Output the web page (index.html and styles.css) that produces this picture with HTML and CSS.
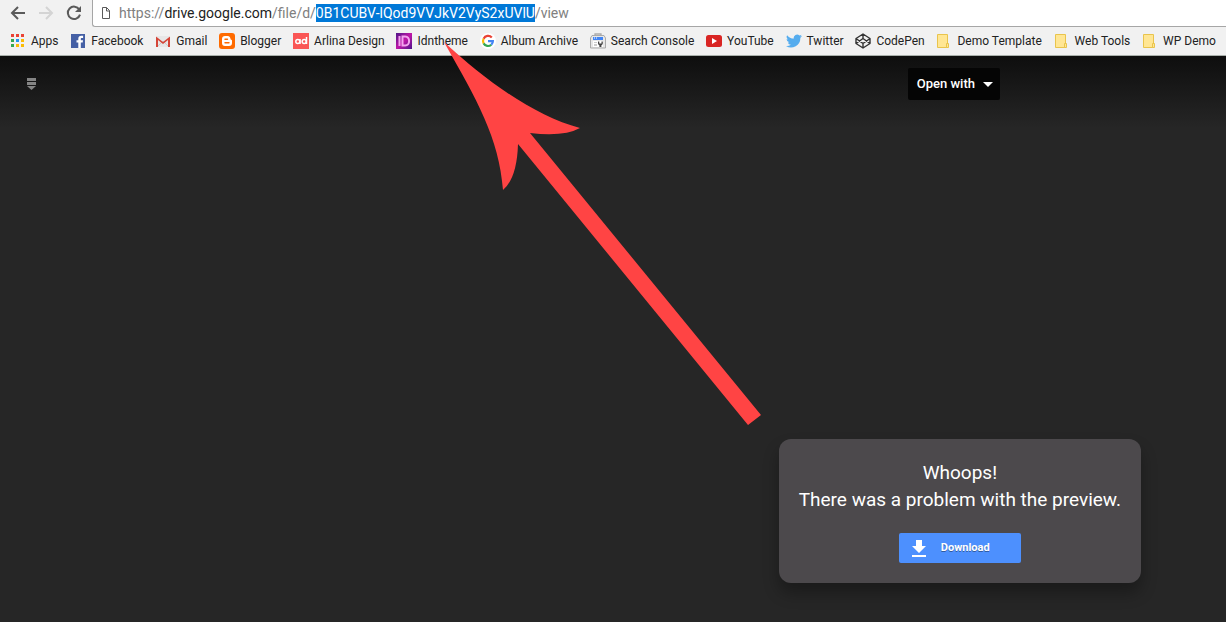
FILE: index.html
```html
<!DOCTYPE html>
<html lang="en">
<head>
<meta charset="utf-8">
<title>Google Drive preview</title>
<link rel="stylesheet" href="styles.css">
</head>
<body>
<header class="browser">
  <div class="toolbar">
    <button class="nav-button" aria-label="Back"><svg width="16" height="16" viewBox="0 0 16 16"><path d="M15 8H2M8 2L2 8l6 6" fill="none" stroke="#5a5a5a" stroke-width="2"/></svg></button>
    <button class="nav-button" aria-label="Forward" disabled><svg width="16" height="16" viewBox="0 0 16 16"><path d="M1 8h13M8 2l6 6-6 6" fill="none" stroke="#d4d4d4" stroke-width="2"/></svg></button>
    <button class="nav-button" aria-label="Reload"><svg width="16" height="16" viewBox="0 0 16 16"><path d="M13.3 4.5A6.2 6.2 0 1 0 14 9.6" fill="none" stroke="#5a5a5a" stroke-width="2"/><path d="M15 1v6H9z" fill="#5a5a5a"/></svg></button>
    <div class="address">
      <svg width="10" height="14" viewBox="0 0 10 14"><path d="M1.500 1.500h4l3 3v8h-7zM5.500 1.500V5h3" fill="#fff" stroke="#5a5a5a"/></svg>
      <div class="url" role="textbox" aria-label="Address" contenteditable="true" spellcheck="false">https://<span class="host">drive.google.com</span>/file/d/<mark class="selected">0B1CUBV-lQod9VVJkV2VyS2xUVlU</mark>/view</div>
    </div>
  </div>
  <nav class="bookmarks" aria-label="Bookmarks">
    <a class="bookmark" href="#"><svg width="16" height="16" viewBox="0 0 16 16"><path d="M1 1h3v3H1zm5 0h3v3H6zm5 0h3v3h-3z" fill="#ea4335"/><path d="M1 6h3v3H1zm0 5h3v3H1z" fill="#34a853"/><path d="M6 6h3v3H6z" fill="#2196f3"/><path d="M11 6h3v3h-3zM6 11h3v3H6zm5 0h3v3h-3z" fill="#fbbc05"/></svg>Apps</a>
    <a class="bookmark" href="#"><svg width="16" height="16" viewBox="0 0 16 16"><path d="M1 1h14v14H1z" fill="#4560a5"/><path d="M8.300 15V9.500H6.500V7.300h1.800V5.800c0-2 1.100-3 3-3h1.800v2.300h-1.300c-.8 0-1 .4-1 1v1.200H13l-.3 2.200h-1.900V15z" fill="#fff"/></svg>Facebook</a>
    <a class="bookmark" href="#"><svg width="16" height="16" viewBox="0 0 16 16"><path d="M2 3h12v11H2z" fill="#e7e7e7"/><path d="M3 13l5-5 5 5" fill="none" stroke="#ccc"/><path d="M1 14V3.500L8 9l7-5.500V14h-2V7l-5 4-5-4v7z" fill="#d54538"/></svg>Gmail</a>
    <a class="bookmark" href="#"><svg width="16" height="16" viewBox="0 0 16 16"><rect width="16" height="16" rx="3" fill="#ff6b00"/><path d="M6 3h2.500C10.500 3 11.500 4.500 11.500 6c0 1 1.500.5 1.500 1.700V10a3 3 0 0 1-3 3H6a3 3 0 0 1-3-3V6a3 3 0 0 1 3-3z" fill="#fff"/><path d="M6 6.200h2.500M6 9.800h4" stroke="#ff6b00" stroke-width="1.400" stroke-linecap="round"/></svg>Blogger</a>
    <a class="bookmark" href="#"><svg width="16" height="16" viewBox="0 0 16 16"><path d="M0 0h16v16H0z" fill="#fa5655"/><g fill="none" stroke="#fff" stroke-width="1.500"><circle cx="4.800" cy="8.500" r="2"/><path d="M7 6v5M13.500 4v7"/><circle cx="11.200" cy="8.500" r="2"/></g></svg>Arlina Design</a>
    <a class="bookmark" href="#"><svg width="16" height="16" viewBox="0 0 16 16"><defs><linearGradient id="idn" x2="1" y2="1"><stop stop-color="#4e1687"/><stop offset=".5" stop-color="#c016a8"/><stop offset="1" stop-color="#4d128a"/></linearGradient></defs><path d="M0 0h16v16H0z" fill="url(#idn)"/><path d="M3.500 3v10M6.500 3.500h2.700c5.200 0 5.200 9 0 9H6.500z" fill="none" stroke="#f3a4ef" stroke-width="2"/></svg>Idntheme</a>
    <a class="bookmark" href="#"><svg width="16" height="16" viewBox="0 0 16 16"><circle cx="8" cy="8" r="8" fill="#fff"/><g fill="none" stroke-width="2.200"><path d="M11.800 4.500A5 5 0 0 0 3.600 5.700" stroke="#ea4335"/><path d="M3.600 5.700a5 5 0 0 0 0 4.700" stroke="#fbbc05"/><path d="M3.600 10.400a5 5 0 0 0 7.700 1.300" stroke="#34a853"/><path d="M11.300 11.700C12.500 10.600 12.900 9.600 12.900 8.100H8" stroke="#4285f4"/></g></svg>Album Archive</a>
    <a class="bookmark" href="#"><svg width="16" height="16" viewBox="0 0 16 16"><path d="M5 3V1h6v2" fill="none" stroke="#aaa" stroke-width="1.300"/><path d="M2 2.500h12L15.500 5v10H.5V5z" fill="#e7e7e7" stroke="#aaa"/><path d="M3 4h10v3H3z" fill="#4285f4"/><path d="M4 5h1m1 0h1" stroke="#fff"/><path d="M3 8h10v6H3z" fill="#fff"/><path d="M4 9h3v1H4zm0 2h3v2H4z" fill="#ccc"/><path d="M8 8.500v1.800c0 1.200.7 1.700 1.400 2V14h2v-1.700c.7-.3 1.400-.8 1.400-2V8.500h-1.300v2H9.300v-2z" fill="#444"/></svg>Search Console</a>
    <a class="bookmark" href="#"><svg width="16" height="16" viewBox="0 0 16 16"><rect y="2" width="16" height="12" rx="2.500" fill="#d92523"/><path d="M6 5l5 3-5 3z" fill="#fff"/></svg>YouTube</a>
    <a class="bookmark" href="#"><svg width="16" height="16" viewBox="0 0 24 24"><path d="M24 4.600a10 10 0 0 1-2.800.8 5 5 0 0 0 2.100-2.700 10 10 0 0 1-3.100 1.200 4.900 4.900 0 0 0-8.400 4.500A14 14 0 0 1 1.700 3.200a4.900 4.900 0 0 0 1.500 6.500 5 5 0 0 1-2.200-.6 4.900 4.900 0 0 0 3.900 4.900 5 5 0 0 1-2.200.1 4.900 4.900 0 0 0 4.600 3.400A10 10 0 0 1 0 19.500a14 14 0 0 0 21.500-12.400A10 10 0 0 0 24 4.600z" fill="#55acee"/></svg>Twitter</a>
    <a class="bookmark" href="#"><svg width="16" height="16" viewBox="0 0 16 16"><path d="M8 1l7 4.500v5L8 15l-7-4.500v-5zM8 1v4.500M8 10.500V15M1 5.500l7 5 7-5M1 10.500l7-5 7 5" fill="none" stroke="#333" stroke-width="1.400" stroke-linejoin="round"/></svg>CodePen</a>
    <a class="bookmark" href="#"><svg width="16" height="16" viewBox="0 0 16 16"><path d="M1.500 1.500h10v13h-10z" fill="#ffe694" stroke="#e9c44c"/><path d="M10.500 10.500h2v4h-2z" fill="#ffe694" stroke="#e9c44c"/></svg>Demo Template</a>
    <a class="bookmark" href="#"><svg width="16" height="16" viewBox="0 0 16 16"><path d="M1.500 1.500h10v13h-10z" fill="#ffe694" stroke="#e9c44c"/><path d="M10.500 10.500h2v4h-2z" fill="#ffe694" stroke="#e9c44c"/></svg>Web Tools</a>
    <a class="bookmark" href="#"><svg width="16" height="16" viewBox="0 0 16 16"><path d="M1.500 1.500h10v13h-10z" fill="#ffe694" stroke="#e9c44c"/><path d="M10.500 10.500h2v4h-2z" fill="#ffe694" stroke="#e9c44c"/></svg>WP Demo</a>
  </nav>
</header>
<main class="viewer">
  <div class="viewer-bar">
    <svg width="10" height="14" viewBox="0 0 10 14"><path d="M1 1h9v3H1zm0 4h9v3H1zm0 4h9l-4.500 4z" fill="#858585"/></svg>
    <button class="open-with">Open with<svg width="10" height="5" viewBox="0 0 10 5"><path d="M0 0h10L5 5z" fill="#fff"/></svg></button>
  </div>
  <section class="message">
    <p class="message-text">Whoops!<br>There was a problem with the preview.</p>
    <button class="download"><svg width="14" height="17" viewBox="0 0 14 17"><path d="M4 0h6v6h4l-7 7-7-7h4zM0 15h14v2H0z" fill="#fff"/></svg>Download</button>
  </section>
</main>
<svg class="arrow" width="318" height="386" viewBox="0 0 318 386" aria-hidden="true"><path d="M1 0C42 38 91 74 137 86Q121 95 87 91L318 373 305 383 75 102Q74 136 60 148C56 96 34 58 1 0z" fill="#ff4444"/></svg>
</body>
</html>
```
FILE: styles.css
```css
* { box-sizing: border-box; }
body {
  display: flex;
  flex-direction: column;
  min-height: 100vh;
  margin: 0;
  background: #262626;
  font-family: "Open Sans", "Noto Sans", sans-serif;
}
button { border: 0; padding: 0; background: none; font: inherit; cursor: pointer; }
svg { display: block; flex: none; }
.browser { background: #f1f1f1; border-bottom: 1px solid #a9b0ab; }
.toolbar { display: flex; height: 27px; padding-left: 10px; }
.nav-button { display: flex; align-items: center; width: 28px; height: 26px; }
.address {
  display: flex;
  flex: 1;
  align-items: center;
  gap: 8px;
  margin-left: -2px;
  padding-left: 8px;
  border: 1px solid #a6a6a6;
  border-top: 0;
  border-right: 0;
  border-bottom-left-radius: 3px;
  background: #fff;
}
.url { color: #808080; font: 14px/18px Roboto, sans-serif; white-space: nowrap; outline: 0; }
.host { color: #222; }
.selected { padding: 1px 0; background: #0078d7; color: #fff; }
.bookmarks { display: flex; justify-content: space-between; height: 28px; padding: 0 10px; }
.bookmark {
  display: flex;
  align-items: center;
  gap: 5px;
  color: #222;
  font: 12px/16px Roboto, sans-serif;
  text-decoration: none;
  white-space: nowrap;
}
.viewer {
  display: flex;
  flex: 1;
  flex-direction: column;
  justify-content: space-between;
  padding-bottom: 39px;
  background: linear-gradient(#0e0e0e, #262626 72px);
}
.viewer-bar { display: flex; align-items: center; justify-content: space-between; padding: 12px 226px 0 26px; }
.open-with {
  display: flex;
  align-items: center;
  gap: 8px;
  height: 32px;
  padding: 0 7px 0 9px;
  border-radius: 2px;
  background: #050505;
  color: #fff;
  font: 500 13px/16px Roboto, sans-serif;
}
.message {
  display: flex;
  flex-direction: column;
  align-items: center;
  gap: 20px;
  align-self: flex-end;
  margin-right: 85px;
  padding: 20px;
  border-radius: 12px;
  background: #4c494c;
  box-shadow: 0 10px 16px rgba(0, 0, 0, .3);
}
.message-text { margin: 0; color: #fff; font: 19px/27px Roboto, sans-serif; text-align: center; }
.download {
  display: flex;
  align-items: center;
  gap: 15px;
  width: 122px;
  height: 30px;
  padding-left: 13px;
  border-radius: 2px;
  background: #4d90fe;
  color: #fff;
  font: bold 11px/16px Roboto, sans-serif;
  text-shadow: 0 1px rgba(0, 0, 0, .4);
}
.arrow { position: absolute; top: 42px; left: 443px; pointer-events: none; }
```
